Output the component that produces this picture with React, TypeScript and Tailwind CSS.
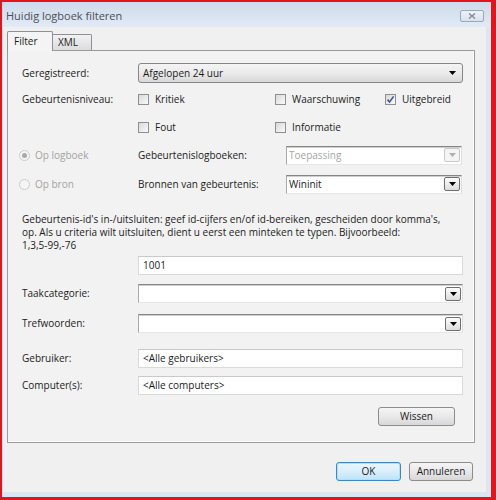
import type { ReactNode } from 'react'

function CheckBox({ checked = false }: { checked?: boolean }) {
  return (
    <span className="relative flex items-center justify-center w-[11px] h-[11px] shrink-0 border border-[#8e8f8f] bg-gradient-to-br from-[#d9d9d9] to-[#fafafa]">
      {checked && (
        <svg width="9" height="9" viewBox="0 0 9 9" className="absolute">
          <path d="M1.5 4.6 L3.6 7 L7.6 1.4" stroke="#3b5998" strokeWidth="1.6" fill="none" />
        </svg>
      )}
    </span>
  )
}

function Check({ label, checked }: { label: string; checked?: boolean }) {
  return (
    <span className="flex items-center gap-[6px]">
      <CheckBox checked={checked} />
      <span>{label}</span>
    </span>
  )
}

function Radio({ label, selected = false }: { label: string; selected?: boolean }) {
  return (
    <span className="flex items-center gap-[5px] -ml-[3px] text-[#a3a3a3]">
      <span className="flex items-center justify-center w-[11px] h-[11px] rounded-full border border-[#cbcbcb] bg-[#f5f5f5]">
        {selected && <span className="w-[5px] h-[5px] rounded-full bg-[#a9a9a9]" />}
      </span>
      <span>{label}</span>
    </span>
  )
}

function Tri({ color = '#000' }: { color?: string }) {
  return (
    <svg width="7" height="4" viewBox="0 0 7 4">
      <polygon points="0,0 7,0 3.5,4" fill={color} />
    </svg>
  )
}

function ArrowBtn({ disabled = false }: { disabled?: boolean }) {
  return (
    <span
      className={
        disabled
          ? 'flex items-center justify-center w-[16px] h-[14px] rounded-[2px] border border-[#c9c9c9] bg-[#f4f4f4]'
          : 'flex items-center justify-center w-[16px] h-[14px] rounded-[2px] border border-[#6f6f6f] bg-gradient-to-b from-[#fdfdfd] to-[#dcdcdc]'
      }
    >
      <Tri color={disabled ? '#b0b0b0' : '#000'} />
    </span>
  )
}

function Combo({ value = '', disabled = false, width }: { value?: string; disabled?: boolean; width: string }) {
  return (
    <div
      className={`${width} h-[19px] flex items-center bg-white border-t border-t-[#858585] border-l border-l-[#a9a9a9] border-r border-r-[#dedede] border-b border-b-[#e6e6e6] shadow-[inset_0_1px_0_#cfcfcf] pl-[2px] pr-[1px]`}
    >
      <span className={disabled ? 'flex-1 text-[#a6a6a6]' : 'flex-1'}>{value}</span>
      <ArrowBtn disabled={disabled} />
    </div>
  )
}

function TextBox({ value = '' }: { value?: string }) {
  return (
    <div className="w-[325px] h-[19px] flex items-center bg-white border border-[#dadada] border-t-[#c9c9c9] pl-[4px]">
      {value}
    </div>
  )
}

function Button({ children, width, primary = false }: { children: ReactNode; width: string; primary?: boolean }) {
  return (
    <div
      className={
        primary
          ? `${width} h-[19px] flex items-center justify-center rounded-[3px] border border-[#3c87c6] bg-gradient-to-b from-[#eaf6fd] via-[#d9effc] to-[#bde3f8] shadow-[inset_0_0_0_1px_#aee0fb]`
          : `${width} h-[19px] flex items-center justify-center rounded-[3px] border border-[#8c8c8c] bg-gradient-to-b from-[#f5f5f5] via-[#e9e9e9] to-[#d7d7d7]`
      }
    >
      {children}
    </div>
  )
}

function Row({ label, children, className = '' }: { label: string; children: ReactNode; className?: string }) {
  return (
    <div className={`flex items-center ${className}`}>
      <span className="w-[116px] shrink-0">{label}</span>
      {children}
    </div>
  )
}

export default function App() {
  return (
    <div className="w-[496px] h-[500px] border-l-2 border-t-2 border-r-[5px] border-b-[3px] border-[#e2151c] font-['Open_Sans',sans-serif] text-[10px] text-[#1b1b1b]">
      <div className="w-full h-full flex flex-col bg-[#dbe6f3]">
        {/* title bar */}
        <div className="h-[25px] shrink-0 flex items-center justify-between pl-[4px] pr-[7px] pt-[3px] bg-gradient-to-b from-[#cfdbea] to-[#e2eaf5]">
          <span className="text-[11px] text-[#4a4f57]">Huidig logboek filteren</span>
          <span className="flex items-center justify-center w-[24px] h-[12px] rounded-[2px] border border-[#9aa8ba] bg-gradient-to-b from-[#eef2f7] to-[#d9e1ec]">
            <svg width="8" height="6" viewBox="0 0 8 6">
              <path d="M1 0.5 L7 5.5 M7 0.5 L1 5.5" stroke="#7c8594" strokeWidth="1.3" />
            </svg>
          </span>
        </div>

        {/* client */}
        <div className="flex-1 ml-[1px] mr-[5px] mb-[5px] bg-[#f0f0f0] pt-[4px] pl-[4px] flex flex-col">
          <div className="flex items-end h-[19px]">
            <div className="relative z-10 w-[46px] h-[20px] -mb-px border border-b-0 border-[#8e9099] bg-[#f4f4f4] rounded-t-[2px] flex items-center pl-[6px]">
              Filter
            </div>
            <div className="w-[39px] h-[16px] border border-l-0 border-b-0 border-[#8e9099] bg-gradient-to-b from-[#f2f2f2] to-[#dcdcdc] rounded-tr-[2px] flex items-center pl-[5px]">
              XML
            </div>
          </div>

          <div className="w-[468px] h-[393px] border border-[#9a9a9a] bg-[#f2f2f2] shadow-[inset_-1px_-1px_0_#ffffff] pt-[12px] pl-[14px] pr-[11px] flex flex-col">
            <Row label="Geregistreerd:" className="h-[20px]">
              <div className="w-[325px] h-[20px] flex items-center justify-between rounded-[3px] border border-[#868686] bg-gradient-to-b from-[#f4f4f4] via-[#ebebeb] to-[#d8d8d8] pl-[4px] pr-[6px]">
                <span>Afgelopen 24 uur</span>
                <Tri />
              </div>
            </Row>

            <Row label="Gebeurtenisniveau:" className="h-[18px] mt-[7px]">
              <span className="w-[137px]"><Check label="Kritiek" /></span>
              <span className="w-[110px]"><Check label="Waarschuwing" /></span>
              <Check label="Uitgebreid" checked />
            </Row>

            <Row label="" className="h-[18px] mt-[10px]">
              <span className="w-[137px]"><Check label="Fout" /></span>
              <Check label="Informatie" />
            </Row>

            <div className="flex items-center h-[18px] mt-[10px]">
              <span className="w-[116px] shrink-0"><Radio label="Op logboek" selected /></span>
              <span className="w-[148px] shrink-0">Gebeurtenislogboeken:</span>
              <Combo value="Toepassing" disabled width="w-[176px]" />
            </div>

            <div className="flex items-center h-[18px] mt-[11px]">
              <span className="w-[116px] shrink-0"><Radio label="Op bron" /></span>
              <span className="w-[148px] shrink-0">Bronnen van gebeurtenis:</span>
              <Combo value="Wininit" width="w-[176px]" />
            </div>

            <p className="mt-[20px] leading-[13px] whitespace-nowrap">
              Gebeurtenis-id's in-/uitsluiten: geef id-cijfers en/of id-bereiken, gescheiden door komma's,
              <br />
              op. Als u criteria wilt uitsluiten, dient u eerst een minteken te typen. Bijvoorbeeld:
              <br />
              1,3,5-99,-76
            </p>

            <Row label="" className="mt-[4px]">
              <TextBox value="1001" />
            </Row>

            <Row label="Taakcategorie:" className="mt-[9px]">
              <Combo width="w-[325px]" />
            </Row>

            <Row label="Trefwoorden:" className="mt-[11px]">
              <Combo width="w-[325px]" />
            </Row>

            <Row label="Gebruiker:" className="mt-[16px]">
              <TextBox value="<Alle gebruikers>" />
            </Row>

            <Row label="Computer(s):" className="mt-[8px]">
              <TextBox value="<Alle computers>" />
            </Row>

            <div className="flex justify-end mt-[12px] pr-[8px]">
              <Button width="w-[77px]">Wissen</Button>
            </div>
          </div>

          <div className="flex justify-end gap-[8px] mt-[19px] pr-[13px]">
            <Button width="w-[65px]" primary>OK</Button>
            <Button width="w-[64px]">Annuleren</Button>
          </div>
        </div>
      </div>
    </div>
  )
}
